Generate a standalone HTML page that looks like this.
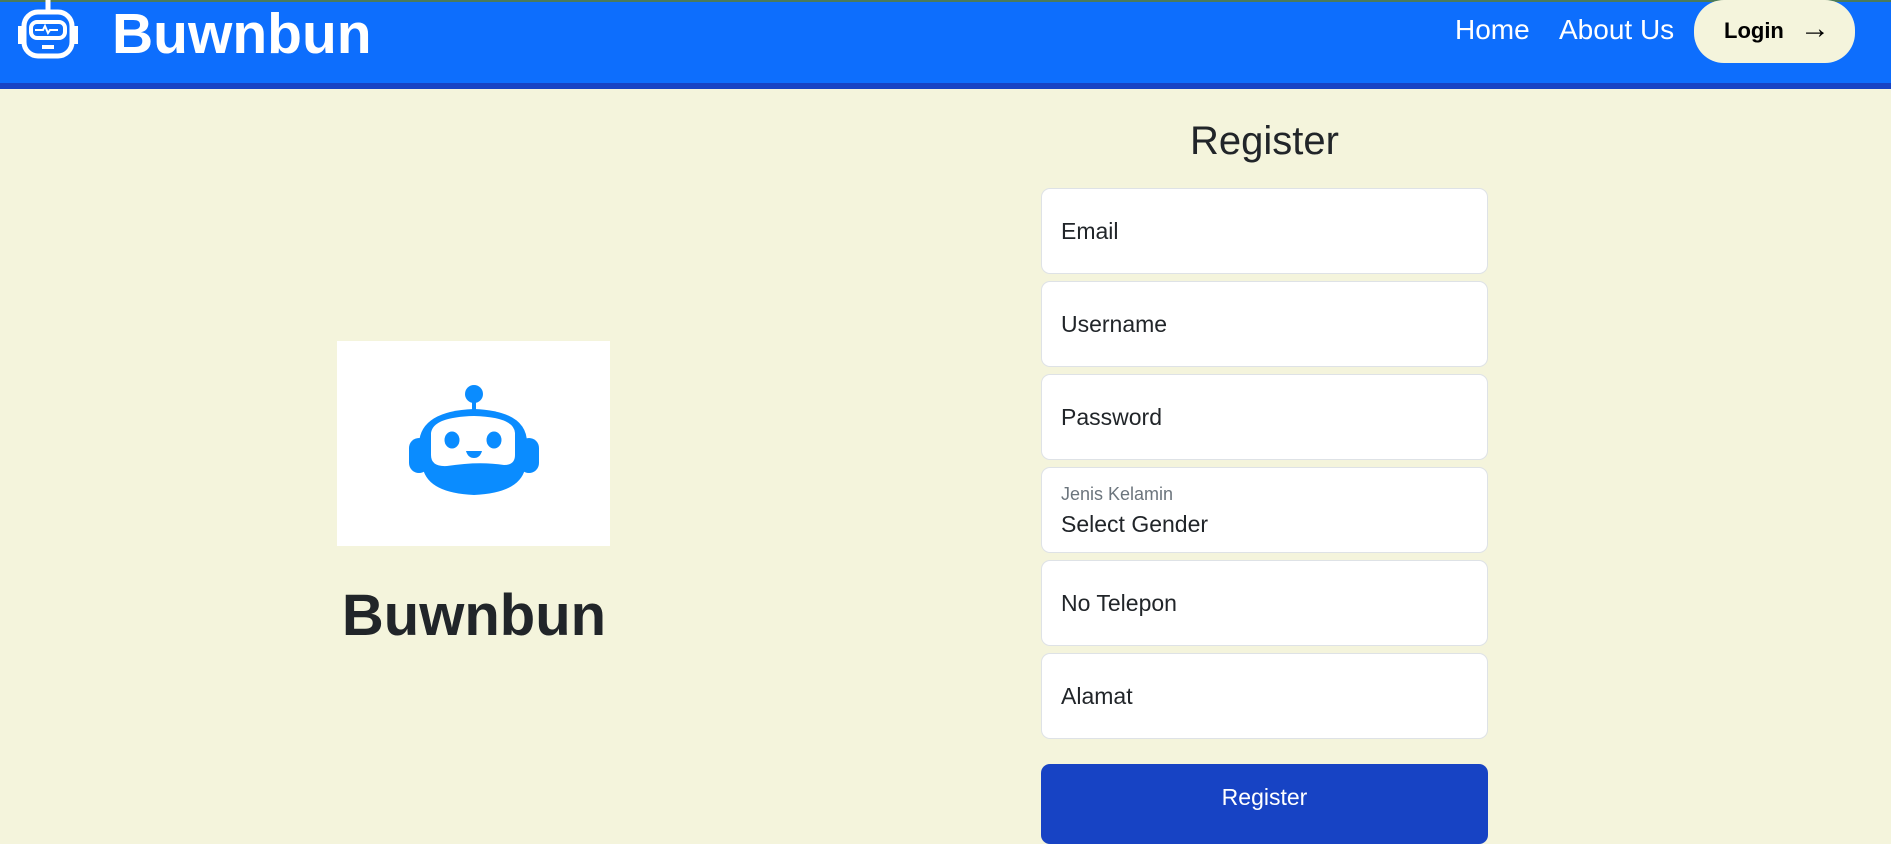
<!DOCTYPE html>
<html><head><meta charset="utf-8"><style>
*{box-sizing:border-box;margin:0;padding:0}
body{width:1891px;height:824px;overflow:hidden;background:#f4f4dc;font-family:"Liberation Sans",sans-serif;color:#212529;position:relative}
.nav{position:absolute;left:0;top:0;width:1891px;height:83px;background:#0d6efd;border-top:2px solid #4a7a5a}
.band{position:absolute;left:0;top:83px;width:1891px;height:6px;background:#1743c4}
.brand{position:absolute;left:112px;top:0;font-size:57px;font-weight:bold;color:#fff;line-height:64px}
.nl{position:absolute;top:10px;font-size:28px;color:#fff;line-height:36px}
.login{position:absolute;left:1694px;top:-2px;width:161px;height:63px;background:#f4f4dc;border-radius:30px;font-weight:bold;font-size:22px;color:#000;line-height:58px;padding-left:30px}
.box{position:absolute;left:337px;top:341px;width:273px;height:205px;background:#fff}
.big{position:absolute;left:274px;width:400px;text-align:center;top:580px;font-size:58px;font-weight:bold;line-height:72px}
h2{position:absolute;left:1041px;width:447px;text-align:center;top:116px;font-size:40px;font-weight:normal;line-height:50px}
.f{position:absolute;left:1041px;width:447px;height:86px;background:#fff;border:1px solid #dee2e6;border-radius:9px;font-size:23px;padding-left:19px;line-height:84px}
.btn{position:absolute;left:1041px;top:764px;width:447px;height:80px;background:#1743c4;border-radius:9px;color:#fff;text-align:center;font-size:23px;line-height:66px}
</style></head><body>
<div class="nav">
<svg style="position:absolute;left:16px;top:-2px" width="64" height="60" viewBox="0 0 64 60" fill="none" stroke="#fff" stroke-width="5">
<line x1="32" y1="0" x2="32" y2="10"/>
<rect x="8" y="12" width="48" height="44" rx="14"/>
<rect x="15" y="22" width="34" height="16" rx="6" stroke-width="4"/>
<path d="M19 30h8l2-4 3 7 2-3h8" stroke-width="2"/>
<line x1="26" y1="47" x2="38" y2="47" stroke-width="4"/>
<path d="M8 28h-4v14h4M56 28h4v14h-4" stroke-width="4"/>
</svg>
<div class="brand">Buwnbun</div>
<div class="nl" style="left:1455px">Home</div>
<div class="nl" style="left:1559px">About Us</div>
<div class="login">Login <span style="font-weight:normal;margin-left:10px;font-size:30px">→</span></div>
</div>
<div class="band"></div>
<div class="box">
<svg style="position:absolute;left:72px;top:42px" width="130" height="115" viewBox="0 0 130 115">
<circle cx="65" cy="11" r="9" fill="#0a8cff"/>
<rect x="63" y="15" width="4" height="14" fill="#0a8cff"/>
<rect x="0" y="55" width="20" height="35" rx="10" fill="#0a8cff"/>
<rect x="110" y="55" width="20" height="35" rx="10" fill="#0a8cff"/>
<path d="M10 60 Q12 28 65 26 Q118 28 118 60 L116 86 Q110 110 65 112 Q20 110 14 86 Z" fill="#0a8cff"/>
<path d="M22 50 Q24 34 65 33 Q105 34 106 50 L106 72 Q106 82 95 82 Q70 78 38 83 Q22 84 22 72 Z" fill="#fff"/>
<ellipse cx="43" cy="57" rx="7.5" ry="8.5" fill="#0a8cff"/>
<ellipse cx="85" cy="57" rx="7.5" ry="8.5" fill="#0a8cff"/>
<path d="M57 68 h16 q-2 7 -8 7 q-6 0 -8 -7z" fill="#0a8cff"/>
</svg>
</div>
<div class="big">Buwnbun</div>
<h2>Register</h2>
<div class="f" style="top:188px">Email</div>
<div class="f" style="top:281px">Username</div>
<div class="f" style="top:374px">Password</div>
<div class="f" style="top:467px;line-height:normal"><div style="font-size:18px;color:#6c757d;margin-top:16px">Jenis Kelamin</div><div style="margin-top:6px">Select Gender</div></div>
<div class="f" style="top:560px">No Telepon</div>
<div class="f" style="top:653px">Alamat</div>
<div class="btn">Register</div>
</body></html>
